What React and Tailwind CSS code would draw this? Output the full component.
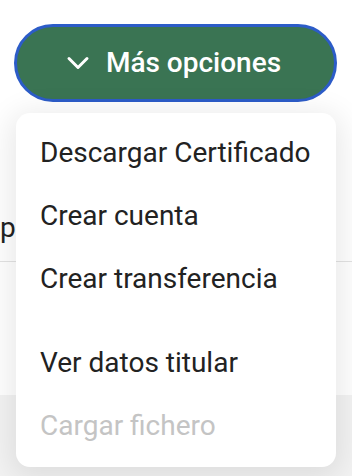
import { ChevronDown } from 'lucide-react';

const items = [
  { label: 'Descargar Certificado' },
  { label: 'Crear cuenta' },
  { label: 'Crear transferencia' },
  { label: 'Ver datos titular', spaced: true },
  { label: 'Cargar fichero', disabled: true },
];

export default function App() {
  return (
    <div
      className="relative w-[352px] h-[476px] overflow-hidden bg-white"
      style={{ fontFamily: 'Roboto, "Liberation Sans", sans-serif' }}
    >
      {/* pagina de fondo */}
      <div className="flex flex-col">
        <div className="h-[195px]" />
        <div className="h-[67px] flex items-center border-b border-[#e3e3e3] text-[28px] text-[#222]">
          <span>p</span>
        </div>
        <div className="h-[133px]" />
        <div className="h-[81px] bg-[#f3f3f3]" />
      </div>

      {/* boton + menu desplegado */}
      <div className="absolute inset-0 flex flex-col pt-6 px-[14px]">
        <button className="h-[78px] w-[323px] rounded-full border-[3px] border-[#2c5cc8] bg-[#3a7453] flex items-center justify-center gap-[10px] text-white">
          <ChevronDown size={36} strokeWidth={2} className="-ml-[10px]" />
          <span className="text-[28px] font-medium">Más opciones</span>
        </button>
        <div className="mt-[11px] ml-[2px] w-[320px] rounded-[14px] bg-white pt-2 pb-[10px] shadow-[0_6px_30px_6px_rgba(0,0,0,0.09)]">
          {items.map((item) => (
            <div
              key={item.label}
              className={`h-[63px] flex items-center px-6 text-[28px] ${
                item.spaced ? 'mt-[21px]' : ''
              } ${item.disabled ? 'text-[#c4c4c4]' : 'text-[#222]'}`}
            >
              {item.label}
            </div>
          ))}
        </div>
      </div>
    </div>
  );
}
